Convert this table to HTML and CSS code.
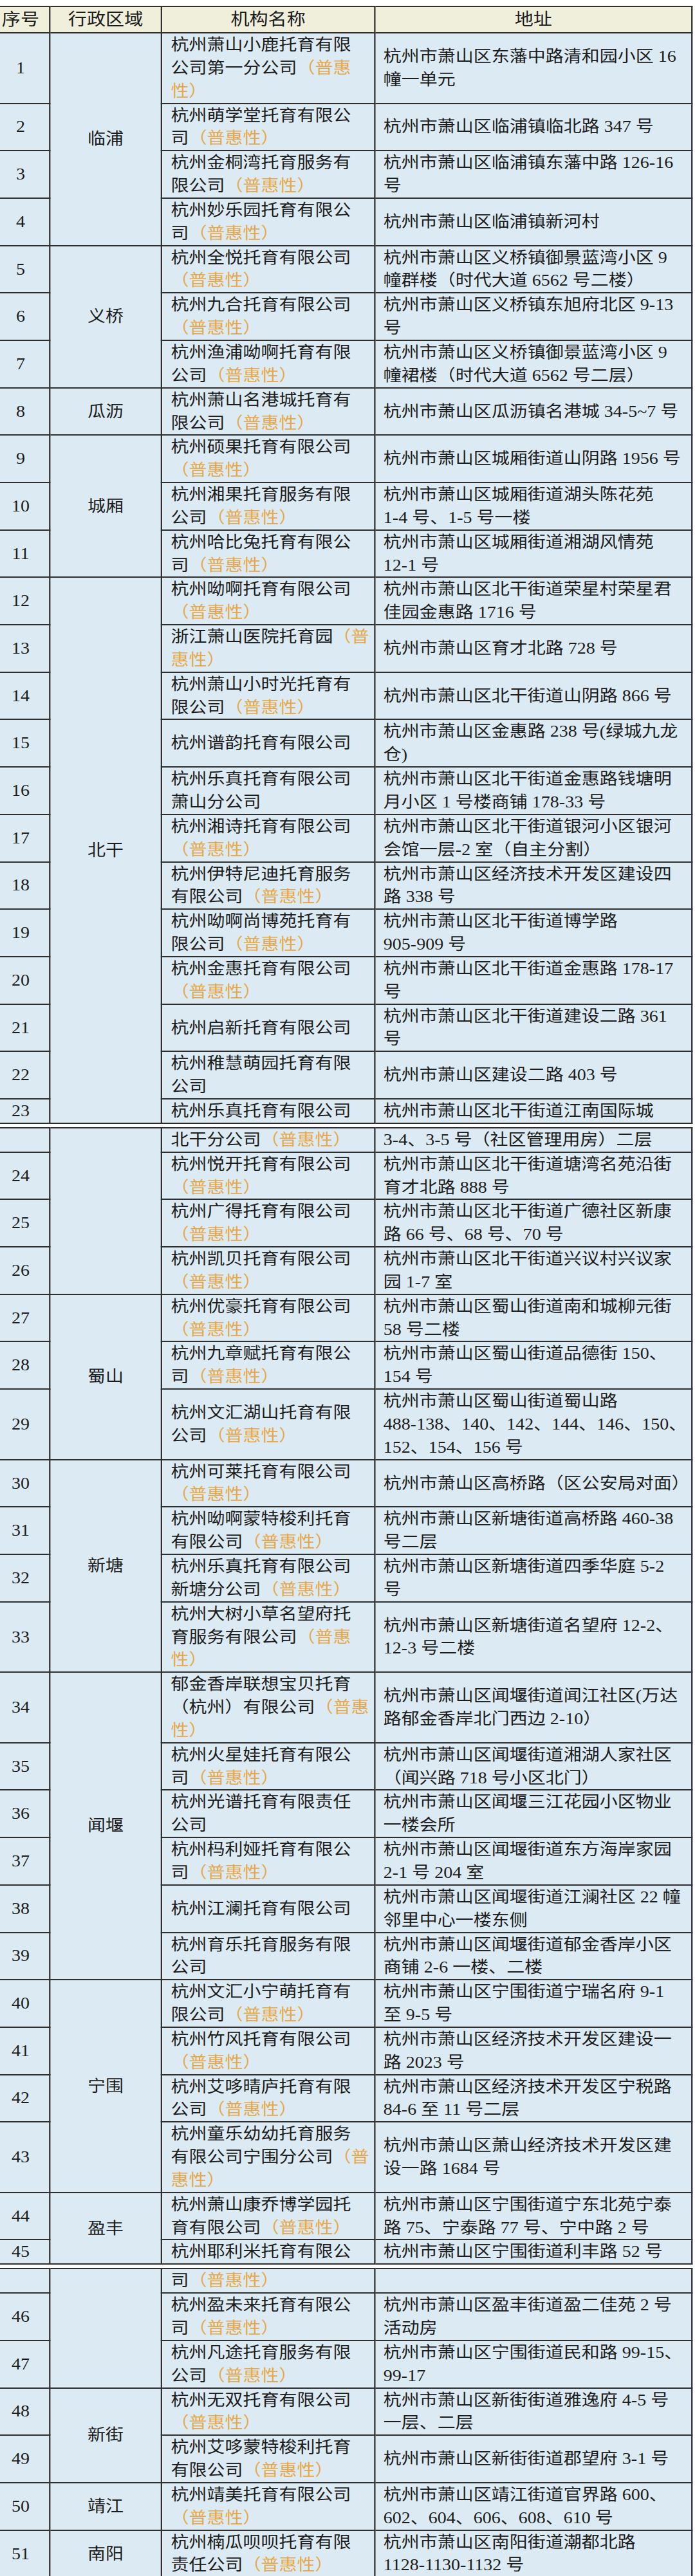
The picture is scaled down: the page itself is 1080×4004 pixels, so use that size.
FILE: index.html
```html
<!DOCTYPE html>
<html lang="zh-CN">
<head>
<meta charset="utf-8">
<title>萧山区托育机构名单</title>
<link rel="stylesheet" href="styles.css">
</head>
<body>
<div class="page">
<div class="sheet">
<table class="grid">
<colgroup><col class="c-no"><col class="c-area"><col class="c-name"><col class="c-addr"></colgroup>
<thead>
<tr><th class="no">序号</th><th>行政区域</th><th>机构名称</th><th>地址</th></tr>
</thead>
<tbody>
<tr><td class="no">1</td><td class="area" rowspan="4">临浦</td><td class="name">杭州萧山小鹿托育有限<br>公司第一分公司<span class="ph">（普惠<br>性）</span></td><td class="addr">杭州市萧山区东藩中路清和园小区 16<br>幢一单元</td></tr>
<tr><td class="no">2</td><td class="name">杭州萌学堂托育有限公<br>司<span class="ph">（普惠性）</span></td><td class="addr">杭州市萧山区临浦镇临北路 347 号</td></tr>
<tr><td class="no">3</td><td class="name">杭州金桐湾托育服务有<br>限公司<span class="ph">（普惠性）</span></td><td class="addr">杭州市萧山区临浦镇东藩中路 126-16<br>号</td></tr>
<tr><td class="no">4</td><td class="name">杭州妙乐园托育有限公<br>司<span class="ph">（普惠性）</span></td><td class="addr">杭州市萧山区临浦镇新河村</td></tr>
<tr><td class="no">5</td><td class="area" rowspan="3">义桥</td><td class="name">杭州全悦托育有限公司<br><span class="ph">（普惠性）</span></td><td class="addr">杭州市萧山区义桥镇御景蓝湾小区 9<br>幢群楼（时代大道 6562 号二楼）</td></tr>
<tr><td class="no">6</td><td class="name">杭州九合托育有限公司<br><span class="ph">（普惠性）</span></td><td class="addr">杭州市萧山区义桥镇东旭府北区 9-13<br>号</td></tr>
<tr><td class="no">7</td><td class="name">杭州渔浦呦啊托育有限<br>公司<span class="ph">（普惠性）</span></td><td class="addr">杭州市萧山区义桥镇御景蓝湾小区 9<br>幢裙楼（时代大道 6562 号二层）</td></tr>
<tr><td class="no">8</td><td class="area">瓜沥</td><td class="name">杭州萧山名港城托育有<br>限公司<span class="ph">（普惠性）</span></td><td class="addr">杭州市萧山区瓜沥镇名港城 34-5~7 号</td></tr>
<tr><td class="no">9</td><td class="area" rowspan="3">城厢</td><td class="name">杭州硕果托育有限公司<br><span class="ph">（普惠性）</span></td><td class="addr">杭州市萧山区城厢街道山阴路 1956 号</td></tr>
<tr><td class="no">10</td><td class="name">杭州湘果托育服务有限<br>公司<span class="ph">（普惠性）</span></td><td class="addr">杭州市萧山区城厢街道湖头陈花苑<br>1-4 号、1-5 号一楼</td></tr>
<tr><td class="no">11</td><td class="name">杭州哈比兔托育有限公<br>司<span class="ph">（普惠性）</span></td><td class="addr">杭州市萧山区城厢街道湘湖风情苑<br>12-1 号</td></tr>
<tr><td class="no">12</td><td class="area" rowspan="12">北干</td><td class="name">杭州呦啊托育有限公司<br><span class="ph">（普惠性）</span></td><td class="addr">杭州市萧山区北干街道荣星村荣星君<br>佳园金惠路 1716 号</td></tr>
<tr><td class="no">13</td><td class="name">浙江萧山医院托育园<span class="ph">（普<br>惠性）</span></td><td class="addr">杭州市萧山区育才北路 728 号</td></tr>
<tr><td class="no">14</td><td class="name">杭州萧山小时光托育有<br>限公司<span class="ph">（普惠性）</span></td><td class="addr">杭州市萧山区北干街道山阴路 866 号</td></tr>
<tr><td class="no">15</td><td class="name">杭州谱韵托育有限公司</td><td class="addr">杭州市萧山区金惠路 238 号(绿城九龙<br>仓)</td></tr>
<tr><td class="no">16</td><td class="name">杭州乐真托育有限公司<br>萧山分公司</td><td class="addr">杭州市萧山区北干街道金惠路钱塘明<br>月小区 1 号楼商铺 178-33 号</td></tr>
<tr><td class="no">17</td><td class="name">杭州湘诗托育有限公司<br><span class="ph">（普惠性）</span></td><td class="addr">杭州市萧山区北干街道银河小区银河<br>会馆一层-2 室（自主分割）</td></tr>
<tr><td class="no">18</td><td class="name">杭州伊特尼迪托育服务<br>有限公司<span class="ph">（普惠性）</span></td><td class="addr">杭州市萧山区经济技术开发区建设四<br>路 338 号</td></tr>
<tr><td class="no">19</td><td class="name">杭州呦啊尚博苑托育有<br>限公司<span class="ph">（普惠性）</span></td><td class="addr">杭州市萧山区北干街道博学路<br>905-909 号</td></tr>
<tr><td class="no">20</td><td class="name">杭州金惠托育有限公司<br><span class="ph">（普惠性）</span></td><td class="addr">杭州市萧山区北干街道金惠路 178-17<br>号</td></tr>
<tr><td class="no">21</td><td class="name">杭州启新托育有限公司</td><td class="addr">杭州市萧山区北干街道建设二路 361<br>号</td></tr>
<tr><td class="no">22</td><td class="name">杭州稚慧萌园托育有限<br>公司</td><td class="addr">杭州市萧山区建设二路 403 号</td></tr>
<tr><td class="no">23</td><td class="name">杭州乐真托育有限公司</td><td class="addr">杭州市萧山区北干街道江南国际城</td></tr>
</tbody>
</table>

<table class="grid">
<colgroup><col class="c-no"><col class="c-area"><col class="c-name"><col class="c-addr"></colgroup>
<tbody>
<tr><td class="no"></td><td class="area" rowspan="4"></td><td class="name">北干分公司<span class="ph">（普惠性）</span></td><td class="addr">3-4、3-5 号（社区管理用房）二层</td></tr>
<tr><td class="no">24</td><td class="name">杭州悦开托育有限公司<br><span class="ph">（普惠性）</span></td><td class="addr">杭州市萧山区北干街道塘湾名苑沿街<br>育才北路 888 号</td></tr>
<tr><td class="no">25</td><td class="name">杭州广得托育有限公司<br><span class="ph">（普惠性）</span></td><td class="addr">杭州市萧山区北干街道广德社区新康<br>路 66 号、68 号、70 号</td></tr>
<tr><td class="no">26</td><td class="name">杭州凯贝托育有限公司<br><span class="ph">（普惠性）</span></td><td class="addr">杭州市萧山区北干街道兴议村兴议家<br>园 1-7 室</td></tr>
<tr><td class="no">27</td><td class="area" rowspan="3">蜀山</td><td class="name">杭州优豪托育有限公司<br><span class="ph">（普惠性）</span></td><td class="addr">杭州市萧山区蜀山街道南和城柳元街<br>58 号二楼</td></tr>
<tr><td class="no">28</td><td class="name">杭州九章赋托育有限公<br>司<span class="ph">（普惠性）</span></td><td class="addr">杭州市萧山区蜀山街道品德街 150、<br>154 号</td></tr>
<tr><td class="no">29</td><td class="name">杭州文汇湖山托育有限<br>公司<span class="ph">（普惠性）</span></td><td class="addr">杭州市萧山区蜀山街道蜀山路<br>488-138、140、142、144、146、150、<br>152、154、156 号</td></tr>
<tr><td class="no">30</td><td class="area" rowspan="4">新塘</td><td class="name">杭州可莱托育有限公司<br><span class="ph">（普惠性）</span></td><td class="addr">杭州市萧山区高桥路（区公安局对面）</td></tr>
<tr><td class="no">31</td><td class="name">杭州呦啊蒙特梭利托育<br>有限公司<span class="ph">（普惠性）</span></td><td class="addr">杭州市萧山区新塘街道高桥路 460-38<br>号二层</td></tr>
<tr><td class="no">32</td><td class="name">杭州乐真托育有限公司<br>新塘分公司<span class="ph">（普惠性）</span></td><td class="addr">杭州市萧山区新塘街道四季华庭 5-2<br>号</td></tr>
<tr><td class="no">33</td><td class="name">杭州大树小草名望府托<br>育服务有限公司<span class="ph">（普惠<br>性）</span></td><td class="addr">杭州市萧山区新塘街道名望府 12-2、<br>12-3 号二楼</td></tr>
<tr><td class="no">34</td><td class="area" rowspan="6">闻堰</td><td class="name">郁金香岸联想宝贝托育<br>（杭州）有限公司<span class="ph">（普惠<br>性）</span></td><td class="addr">杭州市萧山区闻堰街道闻江社区(万达<br>路郁金香岸北门西边 2-10）</td></tr>
<tr><td class="no">35</td><td class="name">杭州火星娃托育有限公<br>司<span class="ph">（普惠性）</span></td><td class="addr">杭州市萧山区闻堰街道湘湖人家社区<br>（闻兴路 718 号小区北门）</td></tr>
<tr><td class="no">36</td><td class="name">杭州光谱托育有限责任<br>公司</td><td class="addr">杭州市萧山区闻堰三江花园小区物业<br>一楼会所</td></tr>
<tr><td class="no">37</td><td class="name">杭州杩利娅托育有限公<br>司<span class="ph">（普惠性）</span></td><td class="addr">杭州市萧山区闻堰街道东方海岸家园<br>2-1 号 204 室</td></tr>
<tr><td class="no">38</td><td class="name">杭州江澜托育有限公司</td><td class="addr">杭州市萧山区闻堰街道江澜社区 22 幢<br>邻里中心一楼东侧</td></tr>
<tr><td class="no">39</td><td class="name">杭州育乐托育服务有限<br>公司</td><td class="addr">杭州市萧山区闻堰街道郁金香岸小区<br>商铺 2-6 一楼、二楼</td></tr>
<tr><td class="no">40</td><td class="area" rowspan="4">宁围</td><td class="name">杭州文汇小宁萌托育有<br>限公司<span class="ph">（普惠性）</span></td><td class="addr">杭州市萧山区宁围街道宁瑞名府 9-1<br>至 9-5 号</td></tr>
<tr><td class="no">41</td><td class="name">杭州竹风托育有限公司<br><span class="ph">（普惠性）</span></td><td class="addr">杭州市萧山区经济技术开发区建设一<br>路 2023 号</td></tr>
<tr><td class="no">42</td><td class="name">杭州艾哆晴庐托育有限<br>公司<span class="ph">（普惠性）</span></td><td class="addr">杭州市萧山区经济技术开发区宁税路<br>84-6 至 11 号二层</td></tr>
<tr><td class="no">43</td><td class="name">杭州童乐幼幼托育服务<br>有限公司宁围分公司<span class="ph">（普<br>惠性）</span></td><td class="addr">杭州市萧山区萧山经济技术开发区建<br>设一路 1684 号</td></tr>
<tr><td class="no">44</td><td class="area" rowspan="2">盈丰</td><td class="name">杭州萧山康乔博学园托<br>育有限公司<span class="ph">（普惠性）</span></td><td class="addr">杭州市萧山区宁围街道宁东北苑宁泰<br>路 75、宁泰路 77 号、宁中路 2 号</td></tr>
<tr><td class="no">45</td><td class="name">杭州耶利米托育有限公</td><td class="addr">杭州市萧山区宁围街道利丰路 52 号</td></tr>
</tbody>
</table>

<table class="grid">
<colgroup><col class="c-no"><col class="c-area"><col class="c-name"><col class="c-addr"></colgroup>
<tbody>
<tr><td class="no"></td><td class="area" rowspan="3"></td><td class="name">司<span class="ph">（普惠性）</span></td><td class="addr"></td></tr>
<tr><td class="no">46</td><td class="name">杭州盈未来托育有限公<br>司<span class="ph">（普惠性）</span></td><td class="addr">杭州市萧山区盈丰街道盈二佳苑 2 号<br>活动房</td></tr>
<tr><td class="no">47</td><td class="name">杭州凡途托育服务有限<br>公司<span class="ph">（普惠性）</span></td><td class="addr">杭州市萧山区宁围街道民和路 99-15、<br>99-17</td></tr>
<tr><td class="no">48</td><td class="area" rowspan="2">新街</td><td class="name">杭州无双托育有限公司<br><span class="ph">（普惠性）</span></td><td class="addr">杭州市萧山区新街街道雅逸府 4-5 号<br>一层、二层</td></tr>
<tr><td class="no">49</td><td class="name">杭州艾哆蒙特梭利托育<br>有限公司<span class="ph">（普惠性）</span></td><td class="addr">杭州市萧山区新街街道郡望府 3-1 号</td></tr>
<tr><td class="no">50</td><td class="area">靖江</td><td class="name">杭州靖美托育有限公司<br><span class="ph">（普惠性）</span></td><td class="addr">杭州市萧山区靖江街道官界路 600、<br>602、604、606、608、610 号</td></tr>
<tr><td class="no">51</td><td class="area">南阳</td><td class="name">杭州楠瓜呗呗托育有限<br>责任公司<span class="ph">（普惠性）</span></td><td class="addr">杭州市萧山区南阳街道潮都北路<br>1128-1130-1132 号</td></tr>
</tbody>
</table>
</div>
</div>
</body>
</html>
```

FILE: styles.css
```css
html, body {
  margin: 0;
  padding: 0;
  background: #ffffff;
}

.page {
  padding-top: 9px;
}

.sheet {
  width: 960px;
  transform: scaleX(1.12);
  transform-origin: 0 0;
}

.grid {
  border-collapse: collapse;
  table-layout: fixed;
  width: 960px;
  font-family: "Liberation Serif", "Noto Sans CJK SC", serif;
  font-size: 25px;
  line-height: 35.85px;
  color: #1c1c1c;
}

.grid + .grid {
  margin-top: 5px;
}

.c-no { width: 69px; }
.c-area { width: 155px; }
.c-name { width: 296px; }
.c-addr { width: 440px; }

.grid th,
.grid td {
  border: 2px solid #2e2e2e;
  padding: 0;
  white-space: nowrap;
  vertical-align: middle;
  background: #dcebf3;
}

.grid th {
  background: #efefdc;
  font-weight: normal;
  font-size: 26px;
  line-height: 39px;
  text-align: center;
}

.grid tr > :first-child {
  border-left: none;
}

.no {
  text-align: center;
  padding-right: 11px !important;
}

.area {
  text-align: center;
}

.name {
  text-align: left;
  padding-left: 12px !important;
}

.addr {
  text-align: left;
  padding-left: 11px !important;
}

.ph {
  color: #e6a84a;
}
```
